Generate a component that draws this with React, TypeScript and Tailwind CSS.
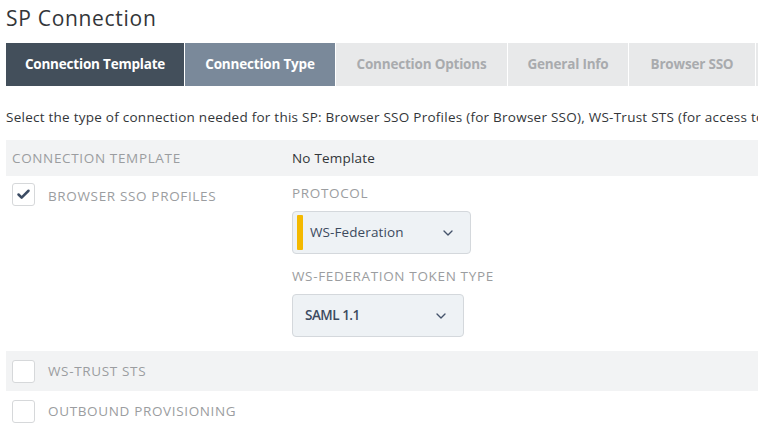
import { Check, ChevronDown } from "lucide-react";

const tabs = [
  { label: "Connection Template", w: "w-[179px]", state: "done" },
  { label: "Connection Type", w: "w-[151px]", state: "active" },
  { label: "Connection Options", w: "w-[172px]", state: "idle" },
  { label: "General Info", w: "w-[121px]", state: "idle" },
  { label: "Browser SSO", w: "w-[127px]", state: "idle" },
  { label: "Credentials", w: "w-[127px]", state: "idle" },
];

const label = "text-[13.5px] tracking-[0.65px] text-[#9b9da0] uppercase";

function Checkbox({ checked }: { checked?: boolean }) {
  return (
    <div className="w-[23px] h-[23px] shrink-0 rounded-[3px] border border-[#d6d8da] bg-white flex items-center justify-center">
      {checked && <Check className="w-[15px] h-[15px] text-[#3b4b63]" strokeWidth={4} />}
    </div>
  );
}

function Select({ value, width, flag, bold }: { value: string; width: string; flag?: boolean; bold?: boolean }) {
  return (
    <div
      className={`${width} h-[43px] rounded-[4px] border border-[#d4d8dc] bg-[#eef2f5] flex items-center pl-[4px] pr-[14px]`}
    >
      {flag ? <div className="w-[6px] h-[35px] rounded-[1px] bg-[#f4b900]" /> : <div className="w-[6px]" />}
      <span className={`flex-1 text-[13.5px] text-[#3c4a5e] ${flag ? "pl-[7px]" : "pl-[2px]"} ${bold ? "font-semibold tracking-[-0.5px]" : "tracking-[0.1px]"}`}>
        {value}
      </span>
      <ChevronDown className="w-[16px] h-[16px] text-[#44536a]" strokeWidth={2} />
    </div>
  );
}

export default function App() {
  return (
    <div className="w-[758px] h-[443px] overflow-hidden bg-white pl-[6px] font-['Open_Sans','Lato',sans-serif]">
      <h1 className="pt-[3px] h-[43px] text-[21px] tracking-[0.7px] text-[#333639] leading-[30px]">SP Connection</h1>
      <div className="flex h-[43px] w-[900px]">
        {tabs.map((t) => (
          <div
            key={t.label}
            className={`${t.w} shrink-0 h-full flex items-center justify-center text-[13.5px] font-bold tracking-[-0.2px] border-r border-white ${
              t.state === "done"
                ? "bg-[#434f5b] text-white"
                : t.state === "active"
                ? "bg-[#7a899a] text-white"
                : "bg-[#e8e9ea] text-[#a9abae]"
            }`}
          >
            {t.label}
          </div>
        ))}
      </div>
      <p className="mt-[22px] text-[13.5px] tracking-[0.25px] leading-[18px] text-[#333639] whitespace-nowrap">
        Select the type of connection needed for this SP: Browser SSO Profiles (for Browser SSO), WS-Trust STS (for access to web services), and Outbound Provisioning
      </p>
      <div className="mt-[14px] h-[36px] bg-[#f2f3f4] flex items-center">
        <span className={`w-[286px] pl-[6px] ${label}`}>Connection Template</span>
        <span className="text-[13.5px] tracking-[0.2px] text-[#333639]">No Template</span>
      </div>
      <div className="flex pt-[7px] pb-[14px]">
        <div className="w-[286px] flex items-start gap-[13px] pl-[6px]">
          <Checkbox checked />
          <span className={`mt-[3px] ${label}`}>Browser SSO Profiles</span>
        </div>
        <div className="flex flex-col">
          <span className={`mt-[1px] leading-[18px] ${label}`}>Protocol</span>
          <div className="mt-[9px]">
            <Select value="WS-Federation" width="w-[179px]" flag />
          </div>
          <span className={`mt-[13px] leading-[18px] ${label}`}>WS-Federation Token Type</span>
          <div className="mt-[9px]">
            <Select value="SAML 1.1" width="w-[172px]" bold />
          </div>
        </div>
      </div>
      <div className="h-[40px] bg-[#f2f3f4] flex items-center gap-[13px] pl-[6px]">
        <Checkbox />
        <span className={label}>WS-Trust STS</span>
      </div>
      <div className="h-[40px] flex items-center gap-[13px] pl-[6px]">
        <Checkbox />
        <span className={label}>Outbound Provisioning</span>
      </div>
    </div>
  );
}
